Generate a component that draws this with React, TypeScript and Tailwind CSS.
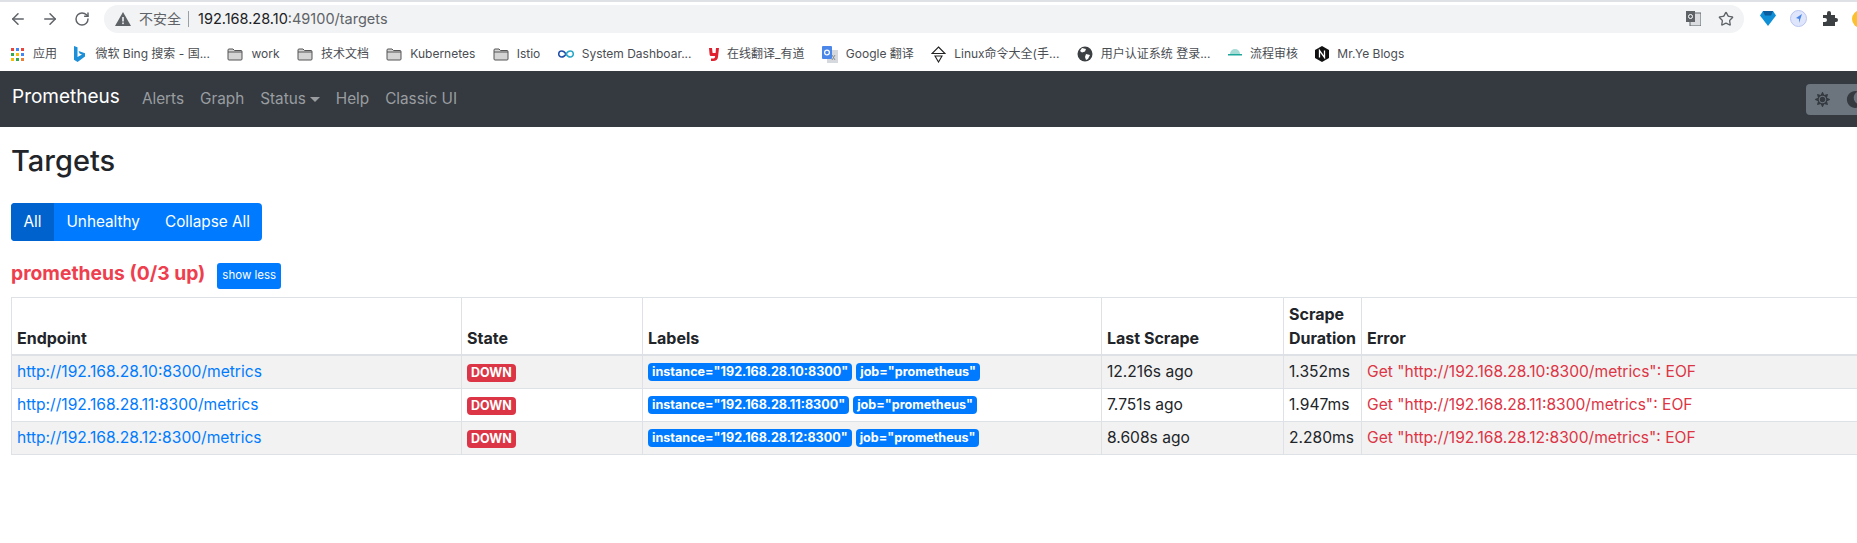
import { ArrowLeft, ArrowRight, RotateCw, Star } from "lucide-react";
import { FaMoon, FaSun } from "react-icons/fa";
import React from "react";

const Folder = () => (
  <svg width="16" height="14" viewBox="0 0 16 14" className="shrink-0">
    <path d="M1 3 a1 1 0 0 1 1-1 h4 l1.5 1.5 H14 a1 1 0 0 1 1 1 V12 a1 1 0 0 1-1 1 H2 a1 1 0 0 1-1-1 Z" fill="#d4d4d4" stroke="#555" strokeWidth="1" />
    <path d="M1 5 H15" stroke="#555" strokeWidth="1" />
  </svg>
);

const Apps = () => (
  <svg width="13" height="13" viewBox="0 0 13 13" className="shrink-0 mr-[1px]">
    {["#e8453c", "#4285f4", "#e8453c", "#34a853", "#fbbc05", "#4285f4", "#fbbc05", "#34a853", "#e8803c"].map((c, i) => (
      <rect key={i} x={(i % 3) * 5} y={Math.floor(i / 3) * 5} width="3" height="3" fill={c} />
    ))}
  </svg>
);

const Bing = () => (
  <svg width="11" height="16" viewBox="0 0 11 16" className="shrink-0 mr-[2px]">
    <path d="M0 0 L3.5 1.2 V11 L8 8.6 L5.6 7.4 L4.6 5 L11 7.2 V10.4 L3.6 16 L0 13.8 Z" fill="#1b8fd8" />
  </svg>
);

const InfinityIcon = () => (
  <svg width="16" height="8" viewBox="0 0 16 8" className="shrink-0" fill="none" strokeWidth="1.5">
    <path d="M8 4 C6.5 1.5 5 1 3.7 1 A3 3 0 0 0 3.7 7 C5 7 6.5 6.5 8 4" stroke="#1f4fa8" />
    <path d="M8 4 C9.5 1.5 11 1 12.3 1 A3 3 0 0 1 12.3 7 C11 7 9.5 6.5 8 4" stroke="#2aa7c9" />
  </svg>
);

const Youdao = () => (
  <svg width="10" height="13" viewBox="0 0 10 13" className="shrink-0">
    <path d="M0 0 H3 L3.6 5 H6.6 L7 0 H10 L9 9 Q8.6 13 4 13 H2 V10.5 H4.5 Q6 10.5 6.2 8 H2 Q0.8 8 0.6 6.5 Z" fill="#e0202f" />
  </svg>
);

const GoogleTranslate = () => (
  <svg width="16" height="17" viewBox="0 0 16 17" className="shrink-0">
    <rect x="5" y="4" width="11" height="13" fill="#d5d8dc" />
    <path d="M10 9 l3 5 M13 9 l-3 5" stroke="#8a8f96" strokeWidth="1" />
    <rect x="0" y="0" width="10" height="13" rx="1" fill="#4a87e8" />
    <circle cx="5" cy="6.5" r="2.4" fill="none" stroke="#fff" strokeWidth="1.2" />
  </svg>
);

const LinuxDiamond = () => (
  <svg width="15" height="17" viewBox="0 0 15 17" className="shrink-0" fill="none" stroke="#222" strokeWidth="1.1">
    <path d="M7.5 1 L14 7.5 H1 Z" />
    <path d="M4 10 H11 L7.5 16 Z" />
  </svg>
);

const Globe = () => (
  <svg width="16" height="16" viewBox="0 0 16 16" className="shrink-0">
    <circle cx="8" cy="8" r="7.5" fill="#3c4043" />
    <path d="M5 2 L9 3 L8 5.5 L5 6.5 L3 5 Z M9 8 L13 9 L11 13 L9 14 L8 11 Z" fill="#fff" />
  </svg>
);

const TealHat = () => (
  <svg width="14" height="10" viewBox="0 0 14 10" className="shrink-0">
    <path d="M2 5 A5 5 0 0 1 12 5 Z" fill="#a7dbd6" />
    <rect x="0" y="5" width="14" height="1.5" fill="#1fa79b" />
  </svg>
);

const Nginx = () => (
  <svg width="14" height="16" viewBox="0 0 14 16" className="shrink-0">
    <path d="M7 0 L14 4 V12 L7 16 L0 12 V4 Z" fill="#111" />
    <path d="M4.5 11.5 V4.5 L9.5 11.5 V4.5" stroke="#fff" strokeWidth="1.3" fill="none" />
  </svg>
);

const bookmarks: { icon: React.ReactNode; text: string }[] = [
  { icon: <Apps />, text: "应用" },
  { icon: <Bing />, text: "微软 Bing 搜索 - 国..." },
  { icon: <Folder />, text: "work" },
  { icon: <Folder />, text: "技术文档" },
  { icon: <Folder />, text: "Kubernetes" },
  { icon: <Folder />, text: "Istio" },
  { icon: <InfinityIcon />, text: "System Dashboar..." },
  { icon: <Youdao />, text: "在线翻译_有道" },
  { icon: <GoogleTranslate />, text: "Google 翻译" },
  { icon: <LinuxDiamond />, text: "Linux命令大全(手..." },
  { icon: <Globe />, text: "用户认证系统 登录..." },
  { icon: <TealHat />, text: "流程审核" },
  { icon: <Nginx />, text: "Mr.Ye Blogs" },
];

const rows = [
  { ip: "192.168.28.10", last: "12.216s ago", dur: "1.352ms" },
  { ip: "192.168.28.11", last: "7.751s ago", dur: "1.947ms" },
  { ip: "192.168.28.12", last: "8.608s ago", dur: "2.280ms" },
];

const App = () => {
  return (
    <div className="w-[1857px] h-[543px] overflow-hidden bg-white text-[#212529] font-['Inter','Noto_Sans_CJK_SC',sans-serif]">
      <div className="h-[2px] bg-[#dee1e6]" />

      {/* browser toolbar */}
      <div className="h-[38px] flex items-center pl-[10px] pb-[5px]">
        <div className="flex items-center gap-[16px] text-[#5f6368]">
          <ArrowLeft size={18} strokeWidth={2} className="-mx-[1px]" />
          <ArrowRight size={18} strokeWidth={2} className="-mx-[1px]" />
          <RotateCw size={16} strokeWidth={2.2} />
        </div>
        <div className="ml-[14px] w-[1640px] shrink-0 h-[28px] rounded-full bg-[#f1f3f4] flex items-center pl-[11px] pr-[10px]">
          <svg width="16" height="14" viewBox="0 0 16 14" className="shrink-0">
            <path d="M8 0 L16 14 H0 Z" fill="#5f6368" />
            <rect x="7.2" y="5" width="1.6" height="4.5" fill="#f1f3f4" />
            <rect x="7.2" y="10.5" width="1.6" height="1.6" fill="#f1f3f4" />
          </svg>
          <span className="ml-[8px] text-[14px] text-[#5f6368]">不安全</span>
          <span className="ml-[7px] w-px h-[16px] bg-[#9aa0a6]" />
          <span className="ml-[9px] text-[14.5px] text-[#202124]">
            192.168.28.10<span className="text-[#5f6368]">:49100/targets</span>
          </span>
          <div className="ml-auto flex items-center gap-[17px] text-[#5f6368]">
            <svg width="15" height="15" viewBox="0 0 15 15">
              <rect x="4" y="2" width="11" height="13" fill="#dadce0" stroke="#5f6368" />
              <rect x="0" y="0" width="9" height="11" fill="#5f6368" />
              <circle cx="4.5" cy="5.5" r="2" fill="none" stroke="#fff" />
            </svg>
            <Star size={16} strokeWidth={2} />
          </div>
        </div>
        <div className="ml-[16px] flex items-center shrink-0">
          <svg width="16" height="15" viewBox="0 0 16 15" className="shrink-0">
            <path d="M3 0 H13 L16 4.5 L8 15 L0 4.5 Z" fill="#0f8fd6" />
            <path d="M3 0 H13 L11 4.5 H5 Z" fill="#0b5d9e" />
          </svg>
          <svg width="17" height="17" viewBox="0 0 17 17" className="ml-[14px] shrink-0">
            <circle cx="8.5" cy="8.5" r="8" fill="#dfe6fb" stroke="#b9c5f2" />
            <path d="M12 4 L6 8 L9 9 L9 13 Z" fill="#4a86e8" />
          </svg>
          <svg width="15" height="15" viewBox="0 0 15 15" className="ml-[16px] shrink-0">
            <path d="M0 4 H4 V2 A2 2 0 0 1 8 2 V4 H12 V7 H13 A2 2 0 0 1 13 11 H12 V15 H0 V11 H2 A2 2 0 0 0 2 7 H0 Z" fill="#3c4043" />
          </svg>
          <div className="ml-[14px] w-[18px] h-[18px] rounded-full bg-[#fbc02d] shrink-0" />
        </div>
      </div>

      {/* bookmarks bar */}
      <div className="h-[31px] flex items-center pl-[11px] pb-[3px] gap-[17.4px] text-[12px] text-[#4a4d52] whitespace-nowrap">
        {bookmarks.map((b) => (
          <div key={b.text} className="flex items-center gap-[8px]">
            {b.icon}
            <span>{b.text}</span>
          </div>
        ))}
      </div>

      {/* prometheus navbar */}
      <nav className="h-[56px] bg-[#343a40] flex items-center pl-[12px]">
        <span className="text-[19px] text-white -mt-[4px]">Prometheus</span>
        <div className="ml-[22px] flex items-center gap-[16px] text-[15.3px] text-[#9a9da0]">
          <span>Alerts</span>
          <span>Graph</span>
          <span className="flex items-center gap-[4px]">
            Status
            <span className="w-0 h-0 border-x-[5px] border-x-transparent border-t-[5px] border-t-[#9a9da0]" />
          </span>
          <span>Help</span>
          <span>Classic UI</span>
        </div>
        <div className="ml-auto h-[31px] w-[60px] -mr-[9px] rounded-l-[4px] bg-[#6c757d] flex items-center pl-[9px] gap-[16px] text-[#343a40] overflow-hidden">
          <FaSun size={15} className="shrink-0" />
          <FaMoon size={17} className="shrink-0" />
        </div>
      </nav>

      {/* page body */}
      <main className="pl-[11px]">
        <h2 className="mt-[15px] text-[29px] leading-[38px] font-medium">Targets</h2>

        <div className="mt-[23px] flex">
          <div className="flex h-[38px] rounded-[4px] overflow-hidden bg-[#007bff] text-white text-[15.3px]">
            <button className="px-[12.5px] bg-[#0062cc]">All</button>
            <button className="px-[12.5px]">Unhealthy</button>
            <button className="px-[12.5px]">Collapse All</button>
          </div>
        </div>

        <div className="mt-[22px] flex items-center h-[26px]">
          <h3 className="text-[19.3px] font-bold text-[#ee3f4f] -mt-[6px]">prometheus (0/3 up)</h3>
          <button className="ml-[12px] h-[26px] px-[5px] rounded-[3px] bg-[#007bff] text-white text-[11.5px]">show less</button>
        </div>

        <table className="mt-[8px] w-[1860px] table-fixed border-collapse text-[15.6px]">
          <colgroup>
            <col className="w-[450px]" />
            <col className="w-[181px]" />
            <col className="w-[459px]" />
            <col className="w-[182px]" />
            <col className="w-[78px]" />
            <col />
          </colgroup>
          <thead>
            <tr className="h-[57px]">
              {["Endpoint", "State", "Labels", "Last Scrape", "Scrape Duration", "Error"].map((h) => (
                <th key={h} className="border border-[#dee2e6] border-b-2 px-[5px] py-[4px] align-bottom text-left text-[16px] font-bold leading-[24px]">
                  {h}
                </th>
              ))}
            </tr>
          </thead>
          <tbody>
            {rows.map((r, i) => (
              <tr key={r.ip} className={`h-[33px] ${i % 2 === 0 ? "bg-[#f2f2f2]" : ""}`}>
                <td className="border border-[#dee2e6] px-[5px] text-[#007bff]">http://{r.ip}:8300/metrics</td>
                <td className="border border-[#dee2e6] px-[5px]">
                  <span className="inline-block h-[18px] px-[4px] rounded-[4px] bg-[#dc3545] text-white text-[12.5px] leading-[18px] font-bold">DOWN</span>
                </td>
                <td className="border border-[#dee2e6] px-[5px]">
                  <div className="flex gap-[4px]">
                    <span className="h-[18px] px-[4px] rounded-[4px] bg-[#007bff] text-white text-[12.6px] leading-[18px] font-bold">instance="{r.ip}:8300"</span>
                    <span className="h-[18px] px-[4px] rounded-[4px] bg-[#007bff] text-white text-[12.6px] leading-[18px] font-bold">job="prometheus"</span>
                  </div>
                </td>
                <td className="border border-[#dee2e6] px-[5px]">{r.last}</td>
                <td className="border border-[#dee2e6] px-[5px]">{r.dur}</td>
                <td className="border border-[#dee2e6] px-[5px] text-[#dc3545]">Get "http://{r.ip}:8300/metrics": EOF</td>
              </tr>
            ))}
          </tbody>
        </table>
      </main>
    </div>
  );
};

export default App;
